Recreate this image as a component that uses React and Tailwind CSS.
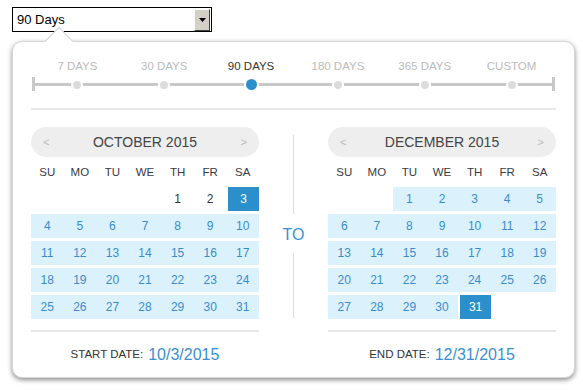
const LABELS = ['7 DAYS', '30 DAYS', '90 DAYS', '180 DAYS', '365 DAYS', 'CUSTOM']
const DAY_NAMES = ['SU', 'MO', 'TU', 'WE', 'TH', 'FR', 'SA']

function weeks(offset, count) {
  const cells = []
  for (let i = 0; i < offset; i++) cells.push(null)
  for (let d = 1; d <= count; d++) cells.push(d)
  while (cells.length % 7) cells.push(null)
  const rows = []
  for (let i = 0; i < cells.length; i += 7) rows.push(cells.slice(i, i + 7))
  return rows
}

function Calendar({ title, offset, count, stateOf, footerLabel, footerDate }) {
  const rows = weeks(offset, count)
  return (
    <div className="w-[228px] flex flex-col">
      <div className="h-[30px] rounded-full bg-[#eeeeee] flex items-center justify-between px-[12px]">
        <span className="text-[11px] text-[#b8b8b8]">&lt;</span>
        <span className="text-[14px] text-[#444]">{title}</span>
        <span className="text-[11px] text-[#b8b8b8]">&gt;</span>
      </div>
      <div className="h-[30px] grid grid-cols-7 items-center pt-[2px]">
        {DAY_NAMES.map((n) => (
          <div key={n} className="text-center text-[11.5px] text-[#3a3a44]">
            {n}
          </div>
        ))}
      </div>
      <div className="flex flex-col gap-[3px]">
        {rows.map((row, i) => (
          <div key={i} className="grid grid-cols-7 h-[24px]">
            {row.map((d, j) => {
              if (d === null) return <div key={j} />
              const s = stateOf(d)
              if (s === 'sel')
                return (
                  <div key={j} className="ml-[2px] bg-[#2a8fcb] text-white flex items-center justify-center text-[12px]">
                    {d}
                  </div>
                )
              if (s === 'range')
                return (
                  <div key={j} className="bg-[#dbf2fd] text-[#3b8bcb] flex items-center justify-center text-[12px]">
                    {d}
                  </div>
                )
              return (
                <div key={j} className="text-[#333] flex items-center justify-center text-[12px]">
                  {d}
                </div>
              )
            })}
          </div>
        ))}
      </div>
      <div className="mt-[11px] h-[2px] bg-[#e6e6e6]" />
      <div className="h-[45px] flex items-center justify-center pt-[1px]">
        <span className="text-[11.5px] text-[#333]">{footerLabel}</span>
        <span className="ml-[5px] text-[16px] text-[#3b8fd0]">{footerDate}</span>
      </div>
    </div>
  )
}

export default function App() {
  return (
    <div className="min-h-screen bg-white pt-[7px] pl-[12px] font-['Liberation_Sans',Arial,sans-serif]">
      <div className="w-[200px] h-[25px] border border-black bg-white flex items-center justify-between">
        <span className="pl-[4px] text-[13px] text-black">90 Days</span>
        <div className="w-[16px] h-[22px] mr-[1px] bg-[#d4d0c8] border border-t-white border-l-white border-r-[#404040] border-b-[#404040] flex items-center justify-center">
          <svg width="7" height="4" viewBox="0 0 7 4">
            <path d="M0 0h7L3.5 4z" fill="#000" />
          </svg>
        </div>
      </div>

      <div className="relative z-10 mt-[9px] w-[563px] rounded-[10px] bg-white border border-[#d6d6d6] shadow-[0_2px_5px_rgba(0,0,0,0.45)] px-[18px]">
        <div className="absolute top-[-11px] left-[36px] w-[20px] h-[20px] rotate-45 bg-white border-l border-t border-[#d0d0d0]" />

        <div className="relative ml-[1px] w-[523px]">
          <div className="mt-[17px] grid grid-cols-6 pl-[2px] h-[14px] leading-[14px] text-[11.5px]">
            {LABELS.map((l) => (
              <div key={l} className={l === '90 DAYS' ? 'text-center text-[#333]' : 'text-center text-[#bbbbbb]'}>
                {l}
              </div>
            ))}
          </div>
          <div className="relative mt-[4px] h-[14px] grid grid-cols-6 pl-[2px] items-center">
            <div className="absolute left-0 right-0 top-[5.5px] h-[3px] bg-[#c8c8c8]" />
            <div className="absolute left-0 top-0 w-[3px] h-[14px] bg-[#c8c8c8]" />
            <div className="absolute right-0 top-0 w-[3px] h-[14px] bg-[#c8c8c8]" />
            {LABELS.map((l) => (
              <div key={l} className="relative flex justify-center">
                {l === '90 DAYS' ? (
                  <div className="w-[15px] h-[15px] rounded-full border-2 border-white bg-[#2a8fcb]" />
                ) : (
                  <div className="w-[12px] h-[12px] rounded-full border-2 border-white bg-[#dcdcdc]" />
                )}
              </div>
            ))}
          </div>
        </div>

        <div className="mt-[17px] h-[2px] bg-[#e8e8e8]" />

        <div className="mt-[17px] flex items-start">
          <Calendar
            title="OCTOBER 2015"
            offset={4}
            count={31}
            stateOf={(d) => (d < 3 ? 'plain' : d === 3 ? 'sel' : 'range')}
            footerLabel="START DATE:"
            footerDate="10/3/2015"
          />
          <div className="w-[69px] flex flex-col items-center pt-[8px]">
            <div className="w-px h-[79px] bg-[#dddddd]" />
            <div className="h-[39px] flex items-center pt-[3px] text-[16px] text-[#3b8fd0]">TO</div>
            <div className="w-px h-[65px] bg-[#dddddd]" />
          </div>
          <Calendar
            title="DECEMBER 2015"
            offset={2}
            count={31}
            stateOf={(d) => (d === 31 ? 'sel' : 'range')}
            footerLabel="END DATE:"
            footerDate="12/31/2015"
          />
        </div>
      </div>
    </div>
  )
}
